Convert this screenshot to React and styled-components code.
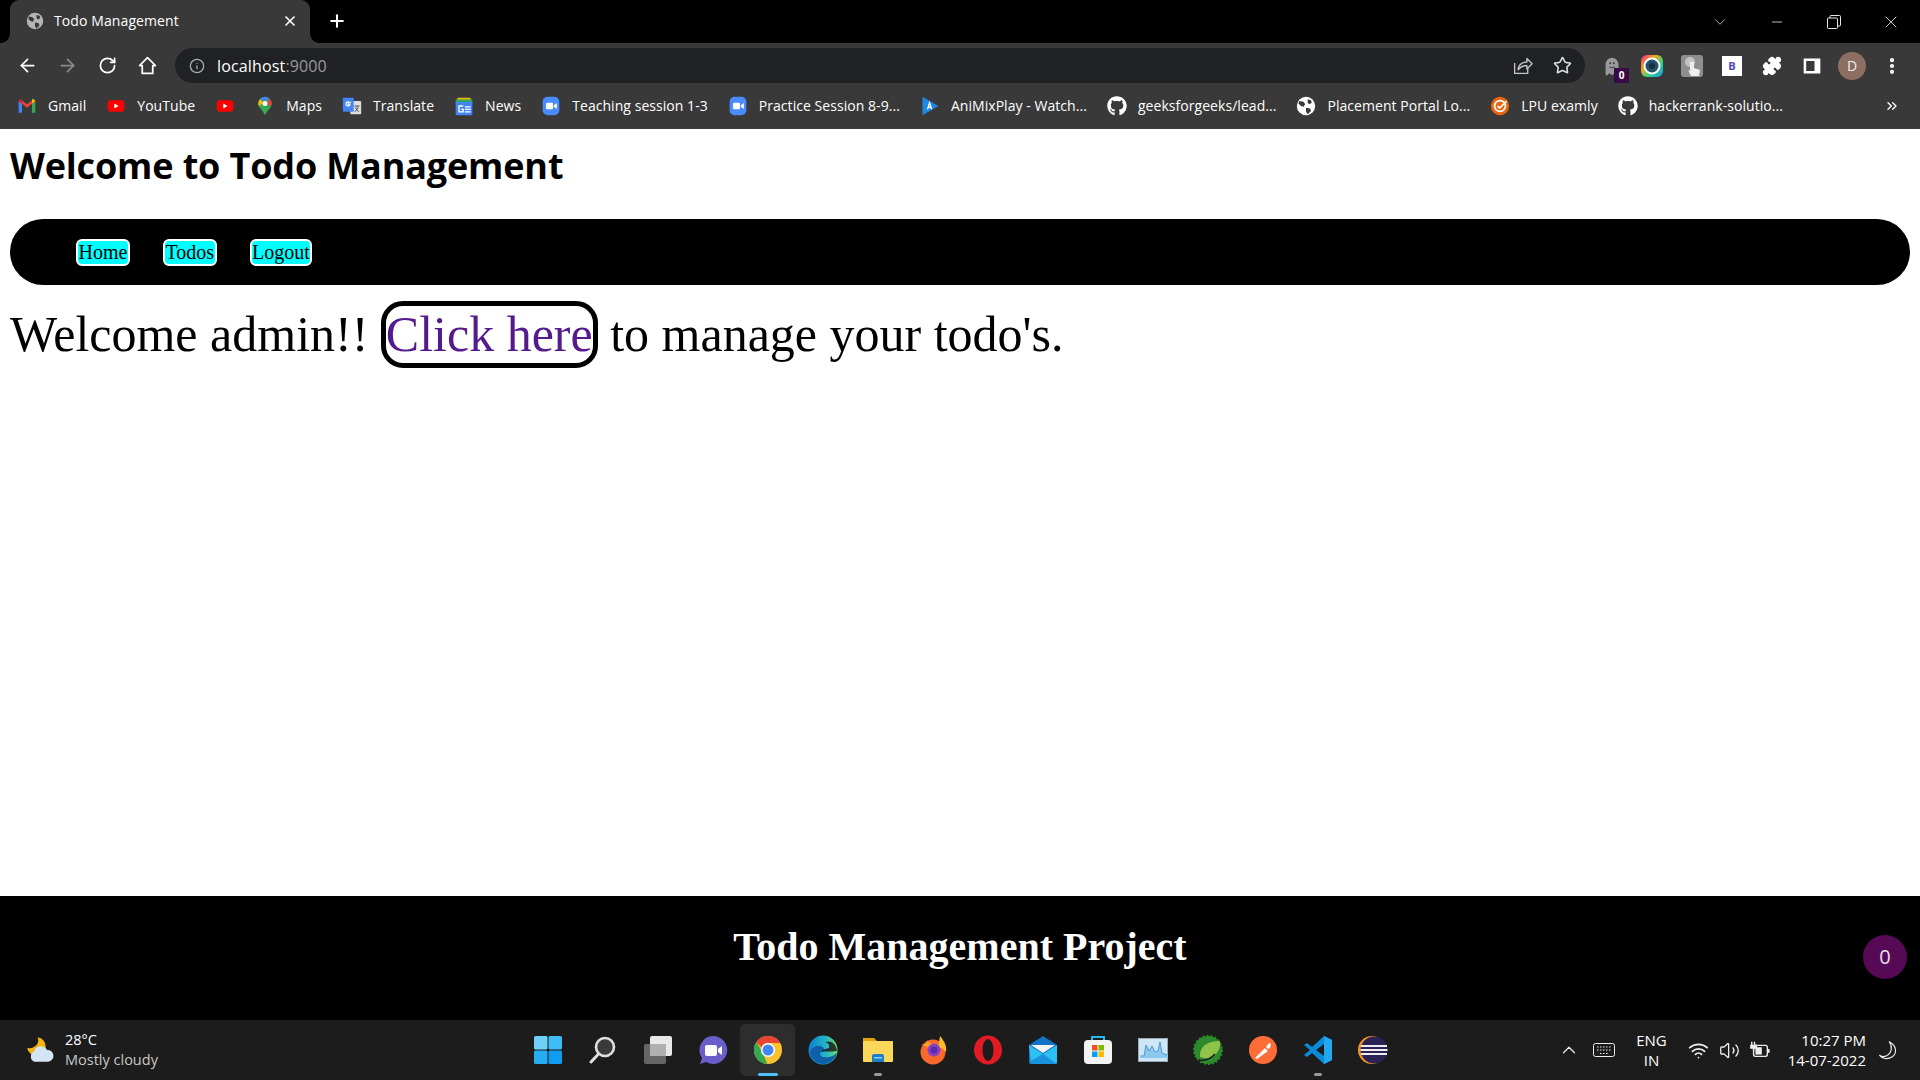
import React from "react";
import styled, { createGlobalStyle } from "styled-components";
import { ArrowLeft, ArrowRight, RotateCw, Info, Star, Puzzle, MoreVertical, ChevronDown, Minus, X, Plus, ChevronUp, Wifi, Volume2, ChevronsRight } from "lucide-react";
import { FaGithub } from "react-icons/fa";

const Global = createGlobalStyle`
  html, body { margin: 0; padding: 0; background: #fff; }
  #root { width: 1920px; height: 1080px; overflow: hidden; }
  * { box-sizing: border-box; }
  svg { flex: none; }
`;
const UI = `"Open Sans", "Noto Sans", sans-serif`;
const Shell = styled.div`display:flex;flex-direction:column;width:1920px;height:1080px;`;
const Chrome = styled.header`display:flex;flex-direction:column;height:129px;background:#393939;color:#fff;font-family:${UI};`;
const TabStrip = styled.div`display:flex;align-items:flex-start;height:43px;background:#000;padding-left:10px;`;
const Tab = styled.div`
  position:relative;display:flex;align-items:center;width:300px;height:43px;padding:0 0 2px 16px;background:#393939;border-radius:9px 9px 0 0;font-size:14px;
  &::before,&::after{content:"";position:absolute;bottom:0;width:9px;height:9px;background:radial-gradient(circle at var(--c) 0,#000 8.5px,#393939 9px);}
  &::before{left:-9px;--c:0;}
  &::after{right:-9px;--c:100%;}
`;
const TabTitle = styled.span`flex:1;margin-left:10px;letter-spacing:0.1px;`;
const TabClose = styled.span`display:flex;width:40px;justify-content:center;`;
const NewTab = styled.span`display:flex;margin:11px 0 0 17px;`;
const WinControls = styled.div`display:flex;margin-left:auto;height:43px;align-items:center;padding-right:1px;`;
const WinBtn = styled.span`display:flex;justify-content:center;width:57px;color:#e8e8e8;`;
const Toolbar = styled.div`display:flex;align-items:center;height:42px;padding:3px 8px 0 7px;`;
const NavBtn = styled.span`display:flex;justify-content:center;width:40px;color:${p => p.$dim ? "#8a8a8a" : "#fff"};`;
const Omnibox = styled.div`display:flex;align-items:center;width:1410px;height:35px;margin-left:8px;border-radius:18px;background:#202124;padding:0 3px 0 14px;color:#aaa;`;
const Url = styled.span`flex:1;margin-left:12px;font-size:16px;letter-spacing:0.15px;color:#fff;`;
const Port = styled.span`color:#9a9a9a;`;
const OmniBtn = styled.span`display:flex;justify-content:center;width:40px;color:#c4c4c4;`;
const Exts = styled.div`display:flex;margin-left:7px;`;
const Ext = styled.span`position:relative;display:flex;align-items:center;justify-content:center;width:40px;height:35px;`;
const GhostBadge = styled.span`position:absolute;right:3px;bottom:0;width:15px;height:15px;background:#3a0a45;font-size:10px;font-weight:700;line-height:15px;text-align:center;`;
const BLetter = styled.span`display:flex;align-items:center;justify-content:center;width:20px;height:20px;background:#fff;color:#4a4ac0;font-size:11px;font-weight:700;`;
const Avatar = styled.span`display:flex;align-items:center;justify-content:center;width:28px;height:28px;border-radius:50%;background:#8d6e63;color:#eee;font-size:14px;`;
const Bookmarks = styled.nav`display:flex;align-items:center;height:44px;padding:0 0 3px 17px;font-size:14px;`;
const Mark = styled.span`display:flex;align-items:center;gap:11px;margin-right:20px;white-space:nowrap;letter-spacing:0.05px;`;
const More = styled.span`display:flex;margin-left:auto;margin-right:20px;`;

const Page = styled.main`flex:1;background:#fff;padding:0 10px;color:#000;`;
const Title = styled.h1`margin:0;padding:12px 0 2px;font:700 36px/50px ${UI};letter-spacing:-0.15px;`;
const NavBar = styled.nav`display:flex;align-items:center;gap:33px;height:66px;margin-top:26px;padding-left:66px;border-radius:33px;background:#000;`;
const NavLink = styled.a`display:block;height:27px;padding:0 0.5px;border:2px solid #fff;border-radius:6px;background:#0ff;color:#000;font:20px/23px "Liberation Serif",serif;`;
const Greeting = styled.p`margin:16px 0 0;font:50px/67px "Liberation Serif",serif;white-space:nowrap;`;
const Manage = styled.a`display:inline-block;border:5px solid #000;border-radius:22px;height:67px;line-height:57px;color:#551a8b;`;

const Footer = styled.footer`position:relative;display:flex;align-items:center;justify-content:center;height:124px;background:#000;color:#fff;`;
const FooterTitle = styled.h2`margin:0 0 22px;font:700 40px/46px "Liberation Serif",serif;`;
const Counter = styled.span`position:absolute;right:13px;top:39px;width:44px;height:44px;border-radius:50%;background:#560a56;color:#e8e0e8;text-align:center;font:20px/44px ${UI};`;

const Taskbar = styled.footer`display:grid;grid-template-columns:1fr auto 1fr;align-items:center;height:60px;background:#1c1c1c;color:#fff;font-family:${UI};font-size:14.500px;`;
const Weather = styled.div`display:flex;align-items:center;gap:11px;padding-left:26px;`;
const Stack = styled.div`display:flex;flex-direction:column;line-height:20px;text-align:${p => p.$align || "left"};`;
const Sub = styled.span`color:#c8c8c8;`;
const Dock = styled.div`display:flex;`;
const DockItem = styled.span`position:relative;display:flex;align-items:center;justify-content:center;width:55px;height:52px;border-radius:5px;background:${p => p.$active ? "#2d2d2d" : "transparent"};`;
const Dot = styled.i`position:absolute;bottom:0;left:50%;transform:translateX(-50%);width:${p => p.$on ? 20 : 8}px;height:3px;border-radius:2px;background:${p => p.$on ? "#4cc2ff" : "#9a9a9a"};`;
const Tray = styled.div`display:flex;align-items:center;justify-content:flex-end;padding-right:21px;font-size:15px;`;
const TrayIcon = styled.span`display:flex;justify-content:center;width:${p => p.$w || 30}px;margin:0 ${p => p.$mr || 0}px 0 ${p => p.$ml || 0}px;color:#eee;`;
const Clock = styled(Stack)`margin:0 9px 0 13px;`;

const Icon = ({ size = 20, children, vb = "0 0 24 24" }) => <svg width={size} height={size} viewBox={vb}>{children}</svg>;
const HomeGlyph = () => <Icon size={21}><path d="M12 3L3 12h3v9h12v-9h3z" fill="none" stroke="#fff" strokeWidth="2" strokeLinejoin="round" /></Icon>;
const ShareGlyph = () => <Icon size={21}><path d="M3 9v12h15v-6" fill="none" stroke="#c4c4c4" strokeWidth="1.500" /><path d="M7 17c0-6 5-9 10-9V4l6 6-6 6v-4c-4 0-7 1-10 5z" fill="none" stroke="#c4c4c4" strokeWidth="1.500" strokeLinejoin="round" /></Icon>;
const Globe = ({ c = "#fff", size = 18 }) => <Icon size={size}><circle cx="12" cy="12" r="11" fill={c}/><path d="M4 6l5 1 2 3-2 3-3-1-3-3zM14 4l4 1 1 3-3 2-2-2zM12 14l5 1 1 3-4 4-2-3z" fill="#393939"/></Icon>;
const Gmail = () => <Icon><path d="M2 6v14h4V9z" fill="#4285f4"/><path d="M22 6v14h-4V9z" fill="#34a853"/><path d="M2 6l10 8 10-8-2-2-8 6-8-6z" fill="#ea4335"/><path d="M2 6l4 3V4H4z" fill="#c5221f"/><path d="M22 6l-4 3V4h2z" fill="#fbbc04"/></Icon>;
const Yt = () => <Icon><rect x="2" y="5" width="20" height="14" rx="4" fill="#f00"/><path d="M10 9l5 3-5 3z" fill="#fff"/></Icon>;
const Pin = () => <Icon><path d="M12 1a8 8 0 0 1 8 8c0 5-5 8-8 14-3-6-8-9-8-14a8 8 0 0 1 8-8z" fill="#34a853"/><path d="M6 3.500a8 8 0 0 1 11-.5l-4 4z" fill="#4285f4"/><path d="M17 3a8 8 0 0 1 3 6c0 1-.2 2-.7 3L14 10z" fill="#ea4335"/><path d="M6 3.500A8 8 0 0 0 4 9c0 1 .2 2 .7 3L10 8z" fill="#fbbc04"/><circle cx="12" cy="9" r="3" fill="#fff"/></Icon>;
const Trans = () => <Icon><rect x="10" y="6" width="13" height="16" rx="1" fill="#ddd"/><rect x="1" y="2" width="13" height="17" rx="1" fill="#4285f4"/><path d="M11 8H7.500v2.500h2a2.500 2.500 0 1 1-.7-3" fill="none" stroke="#fff" strokeWidth="1.400"/><path d="M15 12h6M18 12v2M15.500 19l4-5M16 14l4 5" stroke="#555" strokeWidth="1.200" fill="none"/></Icon>;
const News = () => <Icon><rect x="4" y="2" width="16" height="8" rx="1" fill="#fbbc04"/><rect x="2" y="4" width="20" height="5" fill="#34a853"/><rect x="2" y="7" width="20" height="16" rx="1" fill="#4285f4"/><path d="M11 12H6v7h5v-3H8.500M13 13h7M13 16h7M13 19h7" stroke="#fff" strokeWidth="1.600" fill="none"/></Icon>;
const Zoom = () => <Icon><rect x="2" y="1" width="20" height="22" rx="6" fill="#4a8cff"/><rect x="6" y="8" width="8.500" height="8" rx="1.500" fill="#fff"/><path d="M15.500 11l3.500-2.500v7L15.500 13z" fill="#fff"/></Icon>;
const Ani = () => <Icon><path d="M3 1l19 11L3 23z" fill="#1e88e5"/><path d="M9 16l2.500-8 2.500 8M10 13.500h3" stroke="#fff" strokeWidth="1.600" fill="none"/></Icon>;
const Lpu = () => <Icon><circle cx="12" cy="12" r="11" fill="#e8650f"/><circle cx="12" cy="12" r="6.500" fill="none" stroke="#fff" strokeWidth="2"/><path d="M9 12l2.500 2.500L20 6" stroke="#fff" strokeWidth="2" fill="none"/></Icon>;
const Ghost = () => <Icon size={22}><path d="M5 22V10a7 7 0 0 1 14 0v10l-2 2-2-2-3 2-3-2-2 2z" fill="#9a9a9a"/><circle cx="10" cy="9" r="1" fill="#333"/><circle cx="14" cy="9" r="1" fill="#333"/><path d="M9 13q3 2 6 0" stroke="#333" fill="none"/></Icon>;
const ColorCam = () => <Icon size={24}><defs><linearGradient id="cc" x1="0" y1="0" x2="1" y2="1"><stop offset="0" stopColor="#f0238a"/><stop offset=".35" stopColor="#f5a623"/><stop offset=".65" stopColor="#25d98a"/><stop offset="1" stopColor="#2a8af0"/></linearGradient></defs><rect x="1" y="1" width="22" height="22" rx="6" fill="url(#cc)"/><circle cx="12" cy="12" r="8.500" fill="#fff"/><circle cx="12" cy="12" r="6.500" fill="#27506b"/><circle cx="12" cy="12" r="3" fill="#16303f"/></Icon>;
const Touch = () => <Icon size={24}><rect x="1" y="1" width="22" height="22" rx="3" fill="#8e8e8e"/><circle cx="10" cy="8" r="5" fill="#c4c4c4"/><path d="M10 8v9l-2-1 3 6h8l1-6-6-2V8z" fill="#eee"/></Icon>;
const SidePanel = () => <Icon size={20}><rect x="2" y="3" width="20" height="18" fill="#fff"/><rect x="5" y="6" width="10" height="12" fill="#393939"/></Icon>;
const Windows = () => <Icon size={30} vb="0 0 30 30"><rect x="1" y="1" width="13.500" height="13.500" rx="1.500" fill="#6fd0f8"/><rect x="15.500" y="1" width="13.500" height="13.500" rx="1.500" fill="#3dbcf5"/><rect x="1" y="15.500" width="13.500" height="13.500" rx="1.500" fill="#25aef2"/><rect x="15.500" y="15.500" width="13.500" height="13.500" rx="1.500" fill="#109cf0"/></Icon>;
const Search = () => <Icon size={30} vb="0 0 30 30"><circle cx="17" cy="12" r="9" fill="#3a3a3a" stroke="#e0e0e0" strokeWidth="2.600"/><path d="M10.500 19L3 27" stroke="#e0e0e0" strokeWidth="3" strokeLinecap="round"/></Icon>;
const TaskView = () => <Icon size={32} vb="0 0 32 32"><rect x="8" y="2" width="22" height="20" rx="2" fill="#e8e8e8"/><rect x="2" y="10" width="22" height="20" rx="2" fill="#6f6f6f" fillOpacity=".9"/><rect x="8" y="10" width="16" height="12" fill="#b0b0b0"/></Icon>;
const Chat = () => <Icon size={30} vb="0 0 30 30"><path d="M15 1a14 14 0 1 1-7 26l-6 2 2-6A14 14 0 0 1 15 1z" fill="#6a5fc9"/><rect x="7" y="10" width="12" height="11" rx="2" fill="#fff"/><path d="M20 14l4-3v9l-4-3z" fill="#fff"/></Icon>;
const ChromeLogo = () => <Icon size={30} vb="0 0 30 30"><circle cx="15" cy="15" r="14" fill="#fbc02d"/><path d="M15 1a14 14 0 0 1 12.100 7H15a7 7 0 0 0-6.500 4.500L3.500 7A14 14 0 0 1 15 1z" fill="#ea4335"/><path d="M3.500 7l6.300 11 4.500 11A14 14 0 0 1 3.500 7z" fill="#34a853"/><circle cx="15" cy="15" r="7" fill="#fff"/><circle cx="15" cy="15" r="5.500" fill="#4285f4"/></Icon>;
const Edge = () => <Icon size={30} vb="0 0 30 30"><defs><linearGradient id="eg" x1="0" y1="0" x2="1" y2="0"><stop offset="0" stopColor="#0c7fd0"/><stop offset=".6" stopColor="#22b5c8"/><stop offset="1" stopColor="#6fe06a"/></linearGradient></defs><circle cx="15" cy="15" r="14.500" fill="url(#eg)"/><path d="M29 18c-2 7-8 11.500-14 11-6-.5-12-5-13-11 1-5 6-8 10-7 3 .5 5 3 4 5-4 0-5 3-3 5 4 3 12 1 16-3z" fill="#0f5fa8"/><path d="M13 17c3-1 9 0 16-1-1-8-6-11-12-9 3 1 5 3 4 6-3 1-6 1-8 4z" fill="#1c1c1c" fillOpacity=".85"/></Icon>;
const Folder = () => <Icon size={32} vb="0 0 32 32"><path d="M1 4h11l3 3h16v4H1z" fill="#e0a30d"/><rect x="1" y="7" width="30" height="21" rx="1" fill="#fbd75b"/><path d="M10 22a2 2 0 0 1 2-2h8a2 2 0 0 1 2 2v6H10z" fill="#1e7fc8"/><rect x="12" y="23" width="8" height="1.500" fill="#8fd0f5"/></Icon>;
const Firefox = () => <Icon size={30} vb="0 0 30 30"><circle cx="15" cy="17" r="12.500" fill="#f9692b"/><path d="M22 1c4 5 7 9 6 16-3-4-6-5-8-4z" fill="#fbbc2a"/><path d="M3 9c4 1 6-1 7-4 0 4 6 4 8 4 4 4 1 6-2 6z" fill="#f9a12b"/><circle cx="16" cy="15" r="6.500" fill="#8a3fc9"/><circle cx="16" cy="15" r="3.500" fill="#5a2ca8"/></Icon>;
const Opera = () => <Icon size={30} vb="0 0 30 30"><ellipse cx="15" cy="15" rx="14" ry="14.500" fill="#e01b24"/><ellipse cx="15" cy="15" rx="5.500" ry="11" fill="#1c1c1c"/></Icon>;
const Mail = () => <Icon size={30} vb="0 0 30 30"><path d="M15 1L1 10v17a2 2 0 0 0 2 2h24a2 2 0 0 0 2-2V10z" fill="#1173c4"/><path d="M3 10h24l-12 8z" fill="#f4f4f4"/><path d="M1 10l14 9 14-9v17a2 2 0 0 1-2 2H3z" fill="#2cc1f2"/><path d="M1 27L15 19l14 10H3z" fill="#1b93dc"/></Icon>;
const Store = () => <Icon size={30} vb="0 0 30 30"><path d="M9 6V2h12v4" fill="none" stroke="#25b8f0" strokeWidth="2"/><rect x="1" y="5" width="28" height="24" rx="4" fill="#f3f3f3"/><rect x="9" y="10" width="5.500" height="5.500" fill="#f25022"/><rect x="15.500" y="10" width="5.500" height="5.500" fill="#7fba00"/><rect x="9" y="16.500" width="5.500" height="5.500" fill="#00a4ef"/><rect x="15.500" y="16.500" width="5.500" height="5.500" fill="#ffb900"/></Icon>;
const Chart = () => <Icon size={30} vb="0 0 30 30"><rect x="0.500" y="3.500" width="29" height="23" fill="#cfe6f6" stroke="#98a8b4"/><path d="M2 22l4-1 2-11 3 6 3-5 3 6 3-1 2-9 2 11 6 2v3H2z" fill="#8ac8ee"/><path d="M2 21l4 0 2-11 3 6 3-5 3 6 3-1 2-9 2 11 5 2" fill="none" stroke="#4a9ad8"/></Icon>;
const Spring = () => <Icon size={30} vb="0 0 30 30"><circle cx="15" cy="15" r="14" fill="#2b8a2b" stroke="#2b8a2b" strokeWidth="2" strokeDasharray="2 2"/><path d="M7 22C6 12 14 6 27 6c1 10-6 19-16 17z" fill="#8fc34a"/><path d="M5 25q10 2 17-6" stroke="#1c1c1c" fill="none" strokeWidth="1.500"/></Icon>;
const Postman = () => <Icon size={30} vb="0 0 30 30"><circle cx="15" cy="15" r="14" fill="#ff6c37"/><path d="M7 23l10-10 3 3-11 8zM18 12l3-4 2 1-1 4-2 1z" fill="#fff"/></Icon>;
const VSCode = () => <Icon size={30} vb="0 0 30 30"><path d="M21 1l8 4v20l-8 4-12-11-5 4-3-2 6-5-6-5 3-2 5 4z" fill="#0a8ad8"/><path d="M21 1l8 4v20l-8 4z" fill="#22a7f0"/><path d="M21 9v12l-8-6z" fill="#1c1c1c"/></Icon>;
const Eclipse = () => <Icon size={30} vb="0 0 30 30"><circle cx="14" cy="15" r="14" fill="#f7941e"/><circle cx="16" cy="15" r="13.500" fill="#2c2255"/><path d="M3 11h26M2.500 15h27M3 19h26" stroke="#eee" strokeWidth="1.800"/></Icon>;
const Keyboard = () => <Icon size={22} vb="0 0 22 14"><rect x=".5" y=".5" width="21" height="13" rx="2" fill="none" stroke="#eee"/><path d="M4 4h14M4 7h14M7 10.500h8" stroke="#eee" strokeDasharray="1.500 1.500"/></Icon>;
const Battery = () => <Icon size={22}><path d="M3 3v4M6 3v4M2 7h6v3H2zM5 10v3" stroke="#eee" strokeWidth="1.500" fill="#eee"/><rect x="5" y="7" width="15" height="12" rx="2" fill="none" stroke="#eee" strokeWidth="1.500"/><rect x="7" y="9" width="7" height="8" fill="#eee"/><rect x="20" y="11" width="2.500" height="4" fill="#eee"/></Icon>;
const Crescent = () => <Icon size={21}><path d="M14 2c4 5 3 13-3 16-3 1.500-6 1-8-.5 3 4 9 5 14 2 6-4 6-13-3-17.500z" fill="none" stroke="#eee" strokeWidth="1.300" strokeLinejoin="round" /></Icon>;
const Cloud = () => <Icon size={28}><path d="M10 1a7 7 0 0 1-9 9 8 8 0 1 0 9-9z" fill="#f5b50f"/><path d="M7 22a5 5 0 0 1 0-9 6 6 0 0 1 11-1 5 5 0 0 1 1 10z" fill="#d4e4f4"/></Icon>;

const bookmarks = [
  [<Gmail />, "Gmail"], [<Yt />, "YouTube"], [<Yt />, null], [<Pin />, "Maps"], [<Trans />, "Translate"], [<News />, "News"],
  [<Zoom />, "Teaching session 1-3"], [<Zoom />, "Practice Session 8-9..."], [<Ani />, "AniMixPlay - Watch..."],
  [<FaGithub size={20} />, "geeksforgeeks/lead..."], [<Globe size={20} />, "Placement Portal Lo..."], [<Lpu />, "LPU examly"], [<FaGithub size={20} />, "hackerrank-solutio..."],
];
const dock = [
  [<Windows />], [<Search />], [<TaskView />], [<Chat />], [<ChromeLogo />, "on"], [<Edge />], [<Folder />, "dot"], [<Firefox />], [<Opera />],
  [<Mail />], [<Store />], [<Chart />], [<Spring />], [<Postman />], [<VSCode />, "dot"], [<Eclipse />],
];

export default function App() {
  return (
    <Shell>
      <Global />
      <Chrome>
        <TabStrip>
          <Tab>
            <Globe c="#b4b4b4" />
            <TabTitle>Todo Management</TabTitle>
            <TabClose><X size={16} strokeWidth={2.5} /></TabClose>
          </Tab>
          <NewTab><Plus size={20} strokeWidth={2.5} /></NewTab>
          <WinControls>
            <WinBtn><ChevronDown size={18} strokeWidth={1} /></WinBtn>
            <WinBtn><Minus size={16} strokeWidth={1.2} /></WinBtn>
            <WinBtn><svg width="14" height="14" viewBox="0 0 14 14" fill="none" stroke="currentColor"><rect x=".5" y="3" width="10" height="10.500" rx="1" /><path d="M3 3V1.500a1 1 0 0 1 1-1h8.500a1 1 0 0 1 1 1V10a1 1 0 0 1-1 1H10.500" /></svg></WinBtn>
            <WinBtn><X size={20} strokeWidth={1} /></WinBtn>
          </WinControls>
        </TabStrip>
        <Toolbar>
          <NavBtn><ArrowLeft size={21} /></NavBtn>
          <NavBtn $dim><ArrowRight size={21} /></NavBtn>
          <NavBtn><RotateCw size={19} strokeWidth={2.2} /></NavBtn>
          <NavBtn><HomeGlyph /></NavBtn>
          <Omnibox>
            <Info size={16} />
            <Url>localhost<Port>:9000</Port></Url>
            <OmniBtn><ShareGlyph /></OmniBtn>
            <OmniBtn><Star size={19} strokeWidth={2} color="#e0e0e0" /></OmniBtn>
          </Omnibox>
          <Exts>
            <Ext><Ghost /><GhostBadge>0</GhostBadge></Ext>
            <Ext><ColorCam /></Ext>
            <Ext><Touch /></Ext>
            <Ext><BLetter>B</BLetter></Ext>
            <Ext><Puzzle size={20} fill="#fff" color="#fff" /></Ext>
            <Ext><SidePanel /></Ext>
            <Ext><Avatar>D</Avatar></Ext>
            <Ext><MoreVertical size={20} strokeWidth={3} /></Ext>
          </Exts>
        </Toolbar>
        <Bookmarks>
          {bookmarks.map(([icon, label], i) => <Mark key={i}>{icon}{label && <span>{label}</span>}</Mark>)}
          <More><ChevronsRight size={16} /></More>
        </Bookmarks>
      </Chrome>
      <Page>
        <Title>Welcome to Todo Management</Title>
        <NavBar>
          <NavLink>Home</NavLink>
          <NavLink>Todos</NavLink>
          <NavLink>Logout</NavLink>
        </NavBar>
        <Greeting>Welcome admin!! <Manage>Click here</Manage> to manage your todo's.</Greeting>
      </Page>
      <Footer>
        <FooterTitle>Todo Management Project</FooterTitle>
        <Counter>0</Counter>
      </Footer>
      <Taskbar>
        <Weather>
          <Cloud />
          <Stack><span>28°C</span><Sub>Mostly cloudy</Sub></Stack>
        </Weather>
        <Dock>
          {dock.map(([icon, mark], i) => <DockItem key={i} $active={mark === "on"}>{icon}{mark && <Dot $on={mark === "on"} />}</DockItem>)}
        </Dock>
        <Tray>
          <TrayIcon><ChevronUp size={22} strokeWidth={1.3} /></TrayIcon>
          <TrayIcon $ml={5} $mr={17}><Keyboard /></TrayIcon>
          <Stack $align="center"><span>ENG</span><span>IN</span></Stack>
          <TrayIcon $ml={17}><Wifi size={21} /></TrayIcon>
          <TrayIcon $ml={1}><Volume2 size={21} strokeWidth={1.5} /></TrayIcon>
          <TrayIcon $ml={0}><Battery /></TrayIcon>
          <Clock $align="right"><span>10:27 PM</span><span>14-07-2022</span></Clock>
          <TrayIcon $w={24}><Crescent /></TrayIcon>
        </Tray>
      </Taskbar>
    </Shell>
  );
}
